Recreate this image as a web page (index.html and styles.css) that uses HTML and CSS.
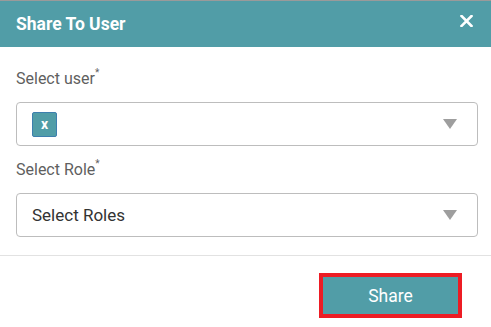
FILE: index.html
```html
<!DOCTYPE html>
<html lang="en">
  <head>
    <meta charset="UTF-8" />
    <meta name="viewport" content="width=device-width, initial-scale=1.0" />
    <title>Share To User</title>
    <link rel="stylesheet" href="styles.css">
  </head>
  <body>
    <div class="modal">
      <div class="modal-header">
        <span class="modal-title">Share To User</span>
        <svg class="modal-close" width="13" height="12" viewBox="0 0 13 12">
          <path d="M1.5 1 L11.5 11 M11.5 1 L1.5 11" stroke="#fff" stroke-width="2.6" stroke-linecap="square" />
        </svg>
      </div>

      <div class="modal-body">
        <div class="field">
          <label class="field-label">Select user<sup>*</sup></label>
          <div class="select-box">
            <span class="chip">x</span>
            <span class="select-arrow"></span>
          </div>
        </div>
        <div class="field">
          <label class="field-label">Select Role<sup>*</sup></label>
          <div class="select-box">
            <span class="select-text">Select Roles</span>
            <span class="select-arrow"></span>
          </div>
        </div>
      </div>

      <div class="modal-footer">
        <button class="share-btn">Share</button>
      </div>
    </div>
  </body>
</html>
```

FILE: styles.css
```css
/* Estilos generales */
body {
  margin: 0;
  font-family: Roboto, "Liberation Sans", sans-serif;
  background: #fff;
}

.modal {
  width: 491px;
  height: 327px;
  border-top: 1px solid #9a9a9a;
  box-sizing: border-box;
}

/* Cabecera */
.modal-header {
  background: #519da7;
  height: 46px;
  display: flex;
  align-items: center;
  justify-content: space-between;
  padding: 0 18px 0 16px;
  color: #fff;
}

.modal-title {
  font-size: 17.5px;
  font-weight: 700;
  margin-top: -1px;
}

.modal-close {
  margin-top: -6px;
}

/* Cuerpo */
.modal-body {
  padding: 23px 13px 0 16px;
  display: flex;
  flex-direction: column;
  gap: 15px;
}

.field-label {
  display: block;
  font-size: 16px;
  color: #5f5f5f;
  margin-bottom: 14px;
  line-height: 18px;
}

.field-label sup {
  font-size: 10px;
  line-height: 0;
  vertical-align: 8px;
}

.select-box {
  height: 44px;
  box-sizing: border-box;
  border: 1px solid #bdbdbd;
  border-radius: 4px;
  display: flex;
  align-items: center;
  padding: 0 20px 0 15px;
}

.chip {
  width: 25px;
  height: 25px;
  box-sizing: border-box;
  background: #519da7;
  border: 1px solid #3d7fae;
  border-radius: 2px;
  color: #fff;
  font-size: 14px;
  font-weight: 700;
  display: flex;
  align-items: center;
  justify-content: center;
  line-height: 1;
}

.select-text {
  font-size: 17px;
  color: #333;
}

.select-arrow {
  margin-left: auto;
  width: 0;
  height: 0;
  border-left: 7px solid transparent;
  border-right: 7px solid transparent;
  border-top: 10px solid #9e9e9e;
}

/* Pie */
.modal-footer {
  margin-top: 18px;
  border-top: 1px solid #e2e2e2;
  display: flex;
  justify-content: flex-end;
  padding: 17px 29px 0 0;
}

.share-btn {
  width: 143px;
  height: 45px;
  background: #519da7;
  border: 4px solid #ed1c24;
  color: #fff;
  font-family: Roboto, "Liberation Sans", sans-serif;
  font-size: 17.5px;
  padding: 0;
  cursor: pointer;
}
```
